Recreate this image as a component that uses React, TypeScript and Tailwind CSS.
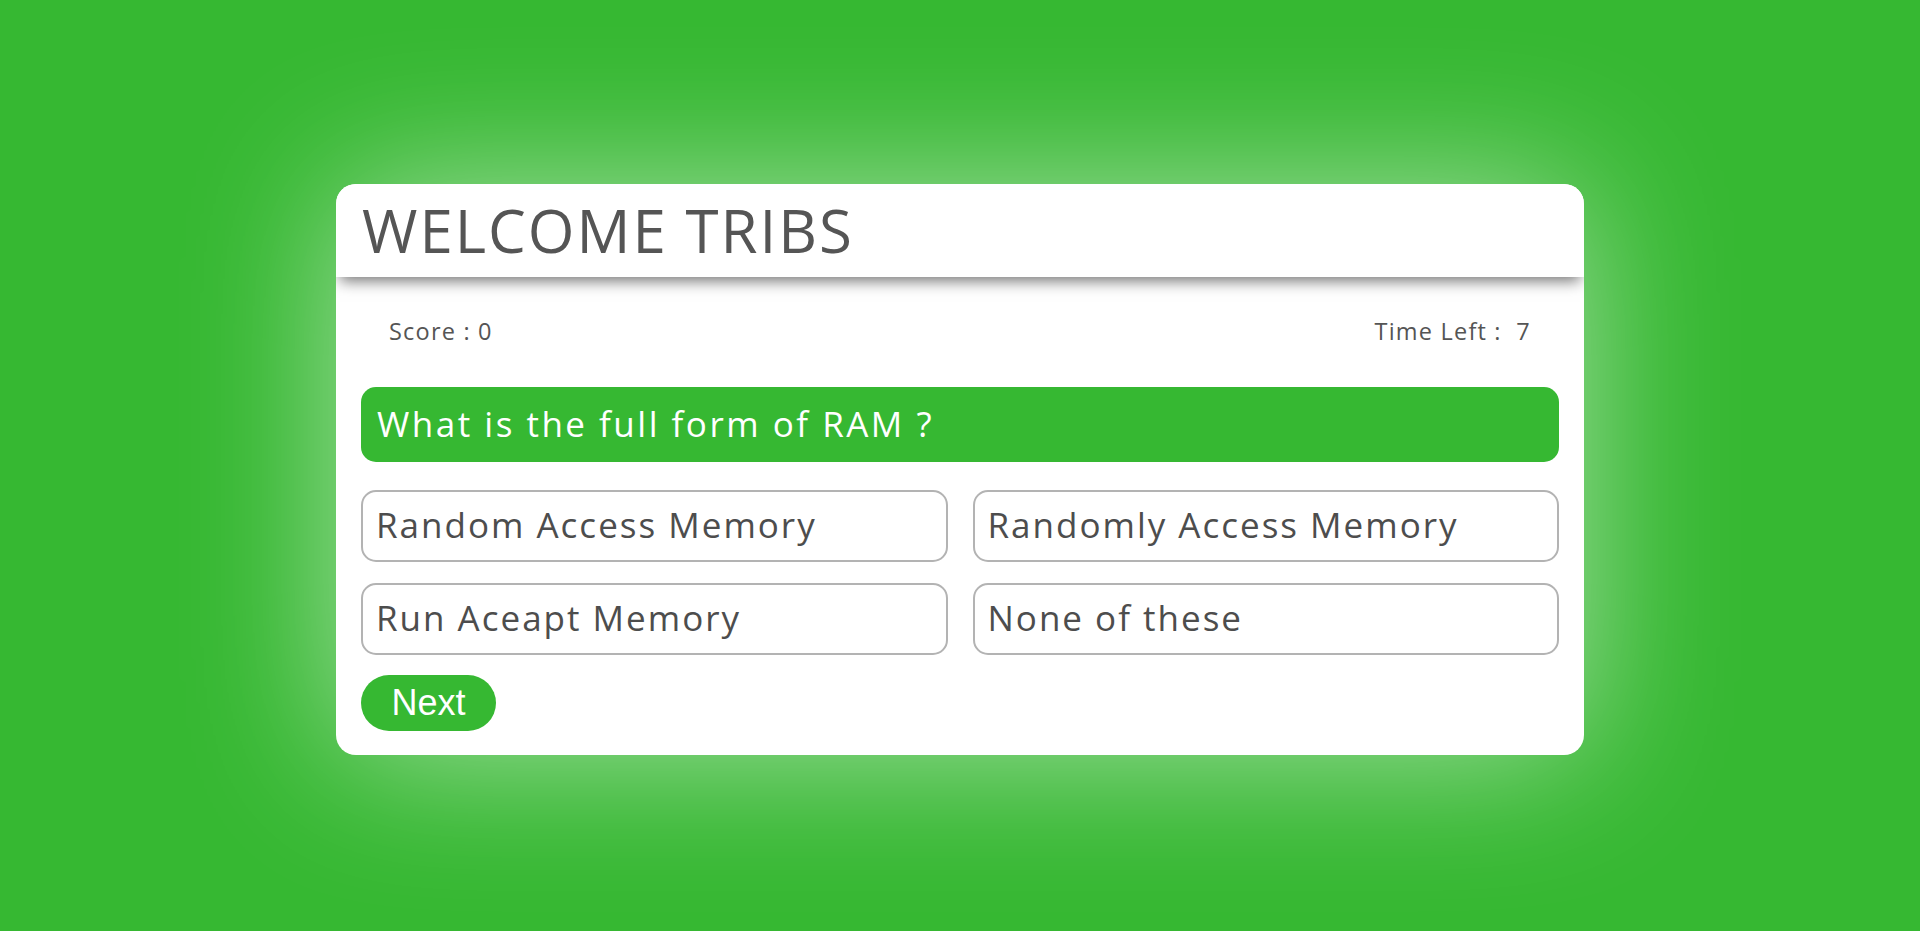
import React from 'react';

const options = ['Random Access Memory', 'Randomly Access Memory', 'Run Aceapt Memory', 'None of these'];

const App = () => {
  return (
    <div className="min-h-screen w-full bg-[#36b832] flex items-center justify-center font-['Open_Sans',sans-serif]">
      <div className="w-[65%] mt-[7px] bg-white rounded-[20px] shadow-[0_0_150px_rgba(255,255,255,0.55)] overflow-hidden">
        <div className="relative z-10 h-[93px] bg-white px-[26px] flex items-center shadow-[0_8px_14px_-4px_rgba(0,0,0,0.55)]">
          <h1 className="text-[60px] leading-none font-normal text-[#555555] tracking-[2px]">WELCOME TRIBS</h1>
        </div>

        <div className="px-[25px] pb-[24px]">
          <div className="h-[110px] flex items-center justify-between px-[28px] text-[23.5px] tracking-[1.2px] text-[#555555]">
            <span>Score : 0</span>
            <span>Time Left :&nbsp; 7</span>
          </div>

          <div className="h-[75px] rounded-[15px] bg-[#36b832] flex items-center px-[16px] text-[35px] tracking-[2.5px] text-white">
            What is the full form of RAM ?
          </div>

          <div className="grid grid-cols-2 gap-x-[25px] gap-y-[21px] mt-[28px]">
            {options.map((opt) => (
              <button
                key={opt}
                className="h-[72px] rounded-[15px] border-2 border-[#b3b3b3] bg-white flex items-center px-[13px] text-[35px] tracking-[2px] text-[#4d4d4d] text-left"
              >
                {opt}
              </button>
            ))}
          </div>

          <button className="mt-[20px] w-[135px] h-[56px] rounded-full bg-[#36b832] text-white text-[36px] font-['Liberation_Sans',Arial,sans-serif] flex items-center justify-center">
            Next
          </button>
        </div>
      </div>
    </div>
  );
};

export default App;
